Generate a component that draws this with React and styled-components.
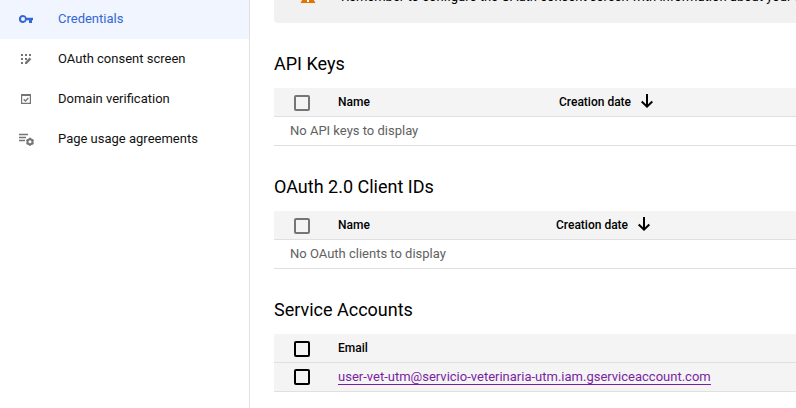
import React from "react";
import styled, { createGlobalStyle } from "styled-components";

const GlobalStyle = createGlobalStyle`
  * { box-sizing: border-box; }
  html, body, #root { height: 100%; }
  body {
    margin: 0;
    overflow: hidden;
    background: #fff;
    color: #000;
    font: 400 13px/20px Roboto, "Liberation Sans", sans-serif;
  }
`;

const Page = styled.div`
  display: flex;
  height: 100%;
  overflow: hidden;
`;

const Sidebar = styled.nav`
  flex: 0 0 250px;
  border-right: 1px solid #e0e0e0;
`;

const NavList = styled.ul`
  list-style: none;
  margin: -1px 0 0;
  padding: 0;
`;

const NavLink = styled.a`
  display: flex;
  align-items: center;
  height: 40px;
  gap: 24px;
  padding-left: 18px;
  text-decoration: none;
  color: ${(p) => (p.$active ? "#3367d6" : "#111")};
  background: ${(p) => (p.$active ? "#f0f5ff" : "transparent")};
`;

const NavIcon = styled.svg`
  flex: none;
  width: 16px;
  height: 16px;
  color: ${(p) => (p.$active ? "#3367d6" : "#757575")};
`;

const Main = styled.main`
  flex: 1;
  min-width: 0;
  padding-left: 24px;
`;

const Banner = styled.div`
  display: flex;
  align-items: center;
  gap: 24px;
  height: 52px;
  margin-top: -29px;
  padding-left: 25px;
  border-radius: 4px 0 0 4px;
  background: #f1f1f1;
  white-space: nowrap;
  overflow: hidden;
`;

const WarningIcon = styled.svg`
  flex: none;
  width: 18px;
  height: 18px;
`;

const Title = styled.h2`
  margin: 29px 0 12px;
  font-size: 18px;
  font-weight: 400;
  line-height: 24px;
`;

const Table = styled.table`
  width: 100%;
  table-layout: fixed;
  border-collapse: separate;
  border-spacing: 0;
`;

const Col = styled.col`
  width: ${(p) => p.$width};
`;

const cell = `
  height: 29px;
  padding: 0;
  border-bottom: 1px solid #e0e0e0;
  text-align: left;
  vertical-align: middle;
`;

const HeadCell = styled.th`
  ${cell}
  background: #f4f4f4;
  font-size: 12px;
  font-weight: 500;
`;

const BodyCell = styled.td`
  ${cell}
  background: #f4f4f4;
`;

const EmptyCell = styled.td`
  ${cell}
  padding-left: 16px;
  color: #616161;
`;

const Checkbox = styled.input`
  appearance: none;
  display: block;
  width: 16px;
  height: 16px;
  margin: 0 0 0 20px;
  border: 2px solid #000;
  border-radius: 2px;
  ${HeadCell} & { margin-top: 1px; }
  &:disabled { border-color: #757575; }
  &:checked { background: #3367d6; border-color: #3367d6; }
`;

const SortButton = styled.button`
  display: flex;
  align-items: center;
  gap: 8px;
  padding: 0;
  border: 0;
  background: none;
  color: inherit;
  font: inherit;
  line-height: 20px;
  cursor: pointer;
`;

const SortIcon = styled.svg`
  width: 16px;
  height: 16px;
`;

const AccountLink = styled.a`
  color: #7b1fa2;
  text-decoration: none;
  border-bottom: 1px solid #7b1fa2;
`;

const icons = {
  key: (
    <path
      fill="currentColor"
      fillRule="evenodd"
      d="M5 4a4 4 0 1 0 3.700 5.300H11V12h3V9.300h1V6.700H8.700A4 4 0 0 0 5 4zm0 2a2 2 0 1 1 0 4 2 2 0 0 1 0-4z"
    />
  ),
  consent: (
    <g fill="currentColor">
      <path d="M3 3h2v2H3zM7 3h2v2H7zM11 3h2v2h-2zM3 7h2v2H3zM7 7h2v2H7zM3 11h2v2H3z" />
      <path d="M7 13v-1.800l4.600-4.600 1.700 1.700L8.700 13z" />
    </g>
  ),
  domain: (
    <g fill="none" stroke="currentColor">
      <path d="M3.600 3.600h8.800v8.800H3.600z" strokeWidth="1.200" />
      <path d="M3 4h10" strokeWidth="2" />
      <path d="M5.700 8.300l1.700 1.700 3-3" strokeWidth="1.300" />
    </g>
  ),
  agreements: (
    <g fill="none" stroke="currentColor">
      <path d="M1 3.500h9M1 6.500h7M1 9.500h6" strokeWidth="1.600" />
      <circle cx="12" cy="10.800" r="2.500" strokeWidth="2" />
      <path
        d="M12 6.800v1.600M12 13.200v1.600M8.500 8.800l1.400.800M14.100 12l1.400.800M8.500 12.800l1.400-.800M14.100 9.600l1.400-.800"
        strokeWidth="2"
      />
    </g>
  ),
};

const navItems = [
  { icon: "key", label: "Credentials", active: true },
  { icon: "consent", label: "OAuth consent screen" },
  { icon: "domain", label: "Domain verification" },
  { icon: "agreements", label: "Page usage agreements" },
];

function SortableHead({ children }) {
  return (
    <HeadCell scope="col" aria-sort="descending">
      <SortButton type="button">
        {children}
        <SortIcon viewBox="0 0 16 16" aria-hidden="true">
          <path d="M8 0v13M2.700 7.500L8 12.700l5.300-5.200" fill="none" stroke="#000" strokeWidth="2" />
        </SortIcon>
      </SortButton>
    </HeadCell>
  );
}

function EmptySection({ title, nameWidth, message }) {
  return (
    <section>
      <Title>{title}</Title>
      <Table aria-label={title}>
        <colgroup>
          <Col $width="64px" />
          <Col $width={nameWidth} />
          <Col />
        </colgroup>
        <thead>
          <tr>
            <HeadCell>
              <Checkbox type="checkbox" disabled aria-label={`Select all ${title}`} />
            </HeadCell>
            <HeadCell scope="col">Name</HeadCell>
            <SortableHead>Creation date</SortableHead>
          </tr>
        </thead>
        <tbody>
          <tr>
            <EmptyCell colSpan={3}>{message}</EmptyCell>
          </tr>
        </tbody>
      </Table>
    </section>
  );
}

export default function App() {
  return (
    <Page>
      <GlobalStyle />
      <Sidebar>
        <NavList>
          {navItems.map(({ icon, label, active }) => (
            <li key={icon}>
              <NavLink href="#" $active={active} aria-current={active ? "page" : undefined}>
                <NavIcon viewBox="0 0 16 16" $active={active} aria-hidden="true">
                  {icons[icon]}
                </NavIcon>
                {label}
              </NavLink>
            </li>
          ))}
        </NavList>
      </Sidebar>
      <Main>
        <Banner role="status">
          <WarningIcon viewBox="0 0 18 18" aria-hidden="true">
            <path d="M9 2l7.500 13h-15z" fill="#e37400" />
            <path d="M8 6h2v4H8zM8 12h2v2H8z" fill="#fff" />
          </WarningIcon>
          Remember to configure the OAuth consent screen with information about your application.
        </Banner>
        <EmptySection title="API Keys" nameWidth="221px" message="No API keys to display" />
        <EmptySection
          title="OAuth 2.0 Client IDs"
          nameWidth="218px"
          message="No OAuth clients to display"
        />
        <section>
          <Title>Service Accounts</Title>
          <Table aria-label="Service Accounts">
            <colgroup>
              <Col $width="64px" />
              <Col />
            </colgroup>
            <thead>
              <tr>
                <HeadCell>
                  <Checkbox type="checkbox" aria-label="Select all service accounts" />
                </HeadCell>
                <HeadCell scope="col">Email</HeadCell>
              </tr>
            </thead>
            <tbody>
              <tr>
                <BodyCell>
                  <Checkbox type="checkbox" aria-label="Select service account" />
                </BodyCell>
                <BodyCell>
                  <AccountLink href="#">
                    user-vet-utm@servicio-veterinaria-utm.iam.gserviceaccount.com
                  </AccountLink>
                </BodyCell>
              </tr>
            </tbody>
          </Table>
        </section>
      </Main>
    </Page>
  );
}
